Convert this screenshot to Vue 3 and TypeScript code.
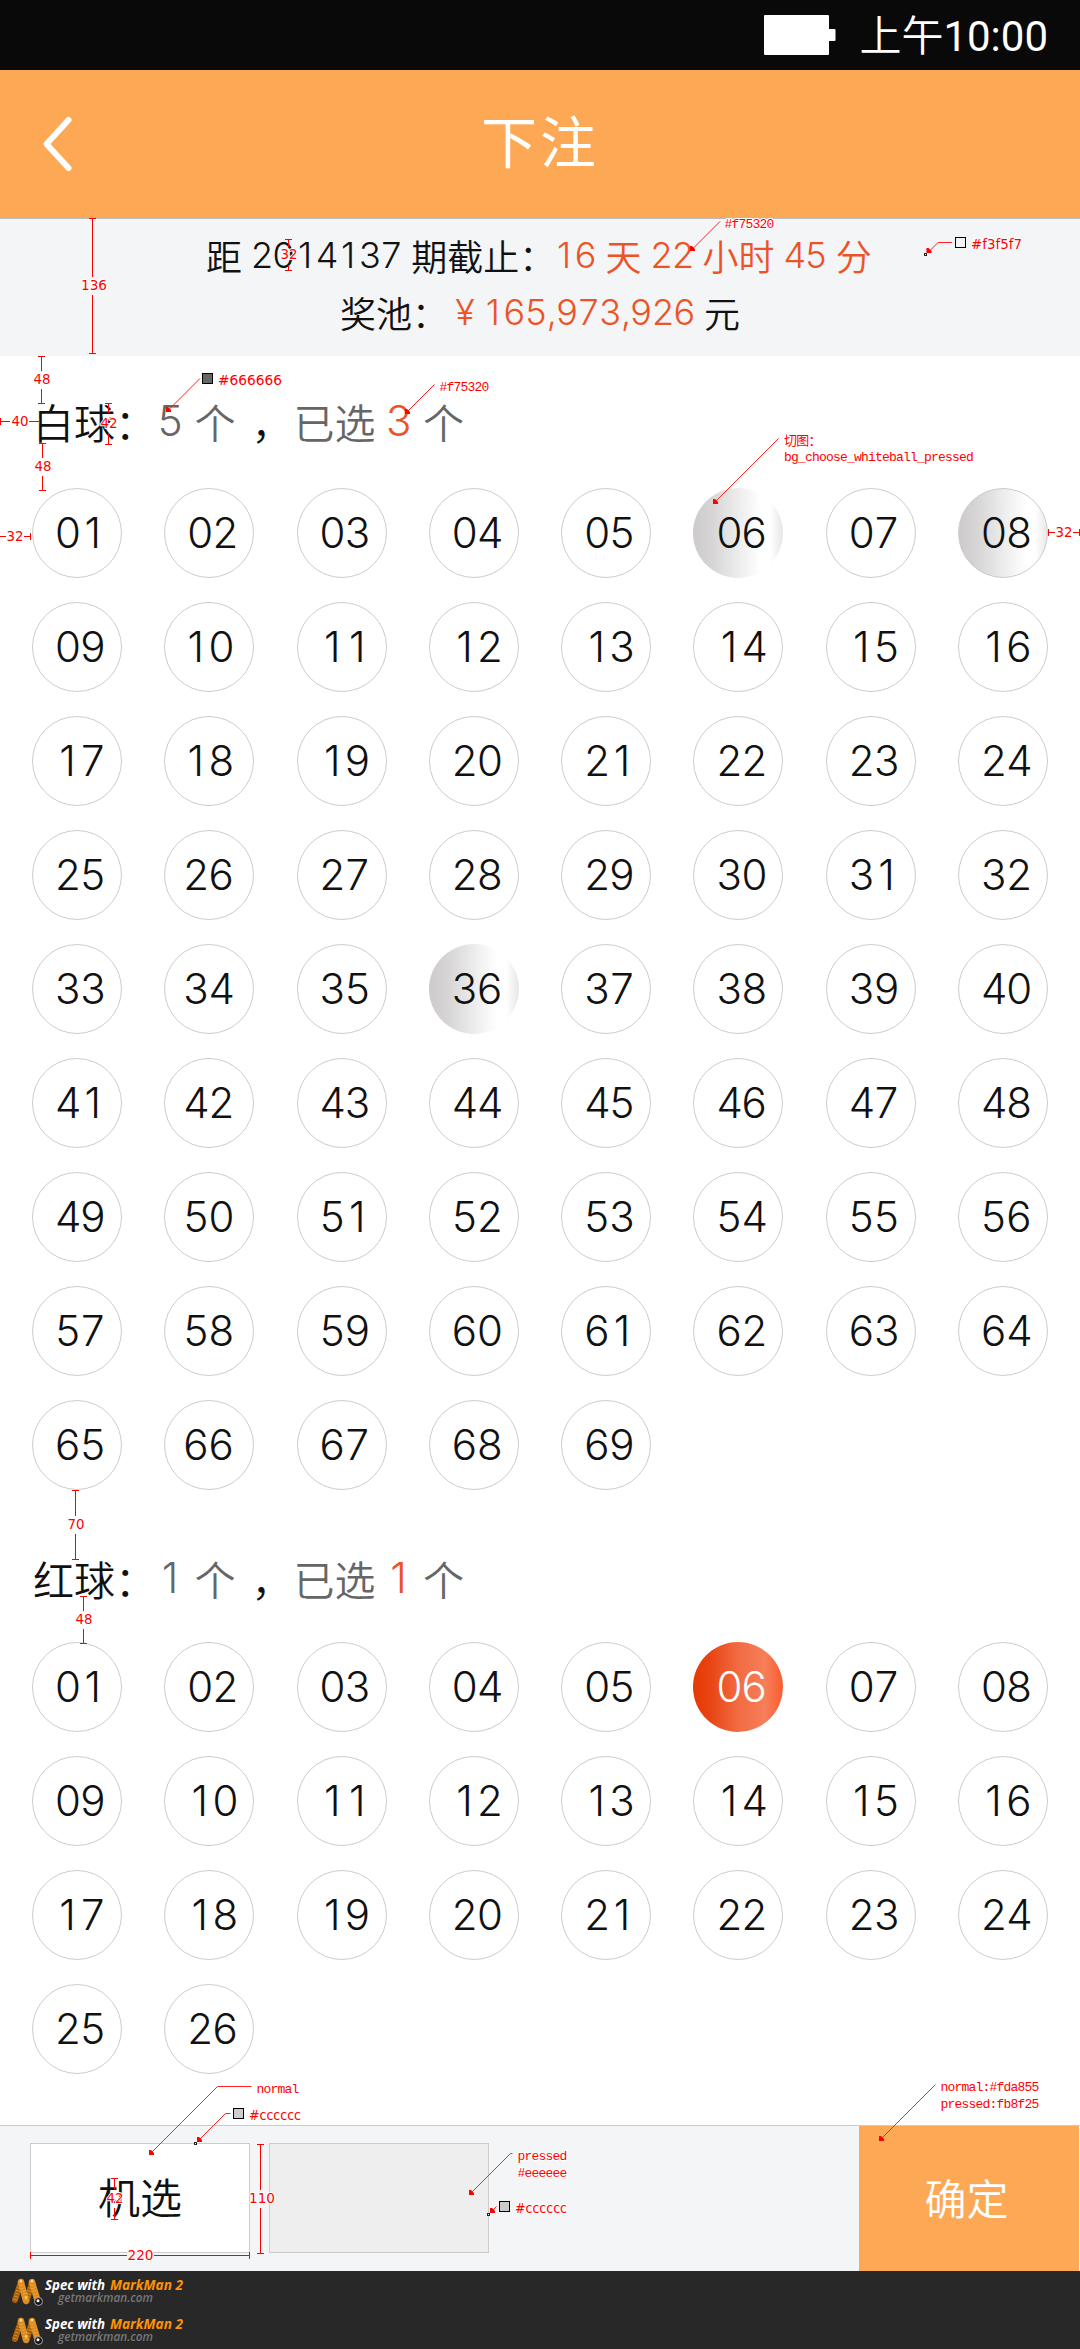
<script setup lang="ts">
import { h } from 'vue'

interface Ball { label: string; selected: boolean; edged: boolean; nudged: boolean }
interface Measure { axis: 'h' | 'v'; at: number; from: number; to: number; gap: [number, number]; label: string; x: number; y: number; w: number; startTick?: boolean }
interface Leader { points: string; tip: [number, number] }
interface Swatch { x: number; y: number; fill: string; label: string; tx: number; ty: number; w: number }
interface Note { x: number; y: number; text: string }

// Evenly pitched digits: every figure sits in a cell of the same width.
const Figures = (props: { value: string }) =>
  h('span', { class: 'num' }, [...props.value].map((c) => h('span', { class: c === ',' ? 'sep' : 'fig' }, c)))
Figures.props = ['value']

const pad = (n: number): string => String(n).padStart(2, '0')

function makeBalls(count: number, selected: number[], edged: number[], nudge: boolean): Ball[] {
  return Array.from({ length: count }, (_, i) => ({
    label: pad(i + 1),
    selected: selected.includes(i + 1),
    edged: edged.includes(i + 1),
    nudged: nudge && i > 7 && i % 8 === 1,
  }))
}

const whiteBalls = makeBalls(69, [6, 8, 36], [8], true)
const redBalls = makeBalls(26, [6], [], false)

const measures: Measure[] = [
  { axis: 'v', at: 92.5, from: 218.5, to: 353.5, gap: [277, 295], label: '136', x: 94, y: 290, w: 26 },
  { axis: 'v', at: 288.5, from: 239.5, to: 270.5, gap: [248, 265], label: '32', x: 289, y: 259, w: 17 },
  { axis: 'v', at: 41.5, from: 356.5, to: 403.5, gap: [371, 389], label: '48', x: 42, y: 384, w: 17 },
  { axis: 'h', at: 421.5, from: 0.5, to: 39.5, gap: [10, 29], label: '40', x: 20, y: 426, w: 17 },
  { axis: 'v', at: 108.5, from: 403.5, to: 444.5, gap: [413, 433], label: '42', x: 109, y: 428, w: 17 },
  { axis: 'v', at: 42.5, from: 443.5, to: 490.5, gap: [458, 476], label: '48', x: 43, y: 471, w: 17 },
  { axis: 'h', at: 536.5, from: 0, to: 30.5, gap: [6, 24], label: '32', x: 15, y: 541, w: 17, startTick: false },
  { axis: 'h', at: 532.5, from: 1048.5, to: 1079.5, gap: [1055, 1073], label: '32', x: 1064, y: 537, w: 17 },
  { axis: 'v', at: 75.5, from: 1490.5, to: 1559.5, gap: [1516, 1534], label: '70', x: 76, y: 1529, w: 17 },
  { axis: 'v', at: 83.5, from: 1596.5, to: 1643.5, gap: [1611, 1629], label: '48', x: 84, y: 1624, w: 17 },
  { axis: 'v', at: 114.5, from: 2178.5, to: 2219.5, gap: [2189, 2208], label: '42', x: 115, y: 2203, w: 17 },
  { axis: 'v', at: 260.5, from: 2144.5, to: 2253.5, gap: [2190, 2208], label: '110', x: 262, y: 2203, w: 26 },
  { axis: 'h', at: 2255.5, from: 30.5, to: 249.5, gap: [127, 154], label: '220', x: 140.5, y: 2260, w: 26 },
]

const leaders: Leader[] = [
  { points: '720,221.5 691,250.5', tip: [690, 251] },
  { points: '952,242.5 938,242.5 928,252.5', tip: [926.5, 253] },
  { points: '200,378.5 167,411.5', tip: [166, 412] },
  { points: '434.5,384.5 405,414', tip: [405, 414] },
  { points: '778.5,438.5 714,503', tip: [713, 504] },
  { points: '251.5,2086.5 217.5,2086.5 150,2154', tip: [149, 2155] },
  { points: '230.5,2113.5 225.5,2113.5 198,2141', tip: [197, 2142] },
  { points: '512.5,2153.5 510.5,2153.5 470,2194', tip: [469, 2195] },
  { points: '496.5,2206.5 491,2212', tip: [490, 2213] },
  { points: '935.5,2084.5 880,2140', tip: [879, 2141] },
]

const swatches: Swatch[] = [
  { x: 955, y: 237, fill: '#f3f5f7', label: '#f3f5f7', tx: 971, ty: 249, w: 51 },
  { x: 202, y: 373, fill: '#666666', label: '#666666', tx: 218, ty: 385, w: 64 },
  { x: 233, y: 2108, fill: '#cccccc', label: '#cccccc', tx: 249, ty: 2120, w: 52 },
  { x: 499, y: 2201, fill: '#cccccc', label: '#cccccc', tx: 515, ty: 2213, w: 52 },
]

const notes: Note[] = [
  { x: 724.5, y: 228, text: '#f75320' },
  { x: 439.5, y: 391, text: '#f75320' },
  { x: 784, y: 445, text: '切图：' },
  { x: 784, y: 461, text: 'bg_choose_whiteball_pressed' },
  { x: 256.5, y: 2093, text: 'normal' },
  { x: 517.5, y: 2160, text: 'pressed' },
  { x: 517.5, y: 2177, text: '#eeeeee' },
  { x: 940.5, y: 2091, text: 'normal:#fda855' },
  { x: 940.5, y: 2108, text: 'pressed:fb8f25' },
]

const probes: [number, number][] = [[924, 253], [194, 2142], [487, 2213]]

function measurePath(m: Measure): string {
  const { at, from, to, gap } = m
  if (m.axis === 'v') {
    return `M${at - 3.5} ${from}h7M${at - 3.5} ${to}h7M${at} ${from}V${gap[0]}M${at} ${gap[1]}V${to}`
  }
  const start = m.startTick === false ? '' : `M${from} ${at - 3.5}v7`
  return `${start}M${to} ${at - 3.5}v7M${from} ${at}H${gap[0]}M${gap[1]} ${at}H${to}`
}
</script>

<template>
  <div class="page">
    <header class="status">
      <svg class="battery" width="72" height="40" viewBox="0 0 72 40"><rect width="65" height="40" rx="1" /><rect x="62" y="14" width="9.5" height="12" rx="1" /></svg>
      <span class="clock"><span class="half">上午</span>10:00</span>
    </header>

    <nav class="titlebar">
      <svg class="back" width="40" height="64" viewBox="0 0 40 64"><path d="M28.5 8L6.500 32L28.500 56" /></svg>
      <h1>下注</h1>
    </nav>

    <section class="info">
      <p class="deadline"><span>距</span><Figures class="gap" value="2014137" /><span class="gap">期截止：</span><Figures class="hot first" value="16" /><span class="hot gap">天</span><Figures class="hot gap" value="22" /><span class="hot gap">小时</span><Figures class="hot gap" value="45" /><span class="hot gap">分</span></p>
      <p class="pool"><span>奖池：</span><span class="hot yen">¥</span><Figures class="hot amount" value="165,973,926" /><span class="gap">元</span></p>
    </section>

    <main>
      <h2 class="heading white-heading">
        <span>白球：</span><Figures class="grey" value="5" /><span class="grey">个</span><span>，</span><span class="grey">已选</span><Figures class="hot" value="3" /><span class="grey">个</span>
      </h2>
      <div class="balls">
        <span v-for="b in whiteBalls" :key="b.label" class="ball" :class="{ silver: b.selected, edged: b.edged, nudged: b.nudged }"><Figures :value="b.label" /></span>
      </div>
      <h2 class="heading red-heading">
        <span>红球：</span><Figures class="grey" value="1" /><span class="grey">个</span><span>，</span><span class="grey">已选</span><Figures class="hot" value="1" /><span class="grey">个</span>
      </h2>
      <div class="balls">
        <span v-for="b in redBalls" :key="b.label" class="ball" :class="{ scarlet: b.selected }"><Figures :value="b.label" /></span>
      </div>
    </main>

    <div class="actions">
      <button class="plain">机选</button>
      <button class="plain pressed" aria-label="pressed"></button>
      <button class="confirm">确定</button>
    </div>

    <footer class="credits">
      <svg v-for="n in 2" :key="n" class="credit" width="200" height="39" viewBox="0 0 200 39">
        <g fill="none" stroke-linecap="round">
          <path d="M21 11L15 29" stroke="#a85f08" stroke-width="6" />
          <path d="M32 11L27 29" stroke="#a85f08" stroke-width="6" />
          <path d="M21 11L26 30" stroke="#dc8c20" stroke-width="6.500" />
          <path d="M32 11L38 31" stroke="#dc8c20" stroke-width="6.500" />
          <path d="M21 11L26 30M32 11L38 31M21 11L15 29M32 11L27 29" stroke="#f4b050" stroke-opacity=".65" stroke-width="4.500" stroke-dasharray=".8 2.200" stroke-linecap="butt" />
        </g>
        <circle cx="21" cy="10" r="1.200" fill="#ffe2a0" /><circle cx="32" cy="10" r="1.200" fill="#ffe2a0" /><circle cx="26" cy="26.500" r="1.200" fill="#ffdf50" />
        <circle cx="38.500" cy="30.500" r="4" fill="#171717" stroke="#a8a8a8" stroke-width="1" /><circle cx="38" cy="29.800" r="1.500" fill="#fff" />
        <text class="spec" x="45" y="19" textLength="60" lengthAdjust="spacingAndGlyphs" fill="#fff">Spec with</text>
        <text class="spec" x="110" y="19" textLength="73" lengthAdjust="spacingAndGlyphs" fill="#ff9205">MarkMan 2</text>
        <text class="site" x="58" y="31" textLength="95" lengthAdjust="spacingAndGlyphs" fill="#777">getmarkman.com</text>
      </svg>
    </footer>

    <svg class="marks" width="1080" height="2349" viewBox="0 0 1080 2349">
      <g v-for="(m, i) in measures" :key="'m' + i">
        <path class="rule" :d="measurePath(m)" />
        <text class="dim" :x="m.x" :y="m.y" :textLength="m.w" lengthAdjust="spacingAndGlyphs" text-anchor="middle">{{ m.label }}</text>
      </g>
      <g v-for="(l, i) in leaders" :key="'l' + i">
        <polyline class="leader" :points="l.points" />
        <path class="tip" :d="`M${l.tip[0]} ${l.tip[1]}v-5l2 0l3 3v2z`" />
      </g>
      <rect v-for="(p, i) in probes" :key="'p' + i" :x="p[0] + 0.5" :y="p[1] + 0.5" width="2" height="2" fill="#fff" stroke="#222" />
      <g v-for="(s, i) in swatches" :key="'s' + i">
        <rect :x="s.x + 0.5" :y="s.y + 0.5" width="10" height="10" :fill="s.fill" stroke="#000" />
        <text class="dim" :x="s.tx" :y="s.ty" :textLength="s.w" lengthAdjust="spacingAndGlyphs">{{ s.label }}</text>
      </g>
      <text v-for="(n, i) in notes" :key="'n' + i" class="note" :x="n.x" :y="n.y">{{ n.text }}</text>
    </svg>
  </div>
</template>

<style>
body { margin: 0; }
</style>

<style scoped>
.page { position: relative; width: 1080px; height: 2349px; overflow: hidden; background: #fff; color: #111; font-family: "Noto Sans CJK SC", sans-serif; }
.page :deep(.num) { font-family: Inter, "Noto Sans CJK SC", sans-serif; font-weight: 350; white-space: nowrap; }
.page :deep(.fig), .page :deep(.sep) { display: inline-block; width: .6em; text-align: center; }
.page :deep(.sep) { width: .26em; }
.hot { color: #ec5326; }
.grey { color: #666; }

.status { display: flex; align-items: center; justify-content: flex-end; box-sizing: border-box; height: 70px; padding-right: 32px; background: #090909; color: #fff; }
.battery { fill: #fff; margin-right: 23px; }
.clock { height: 70px; font: 400 42px/65px Roboto, "Noto Sans CJK SC", sans-serif; white-space: nowrap; }
.half { font-family: "Noto Sans CJK SC", sans-serif; font-weight: 350; }

.titlebar { display: grid; grid-template-columns: 120px 1fr 120px; align-items: center; height: 148px; background: #fda855; color: #fff; }
.back { margin-left: 40px; fill: none; stroke: #fff; stroke-width: 6; stroke-linecap: round; stroke-linejoin: round; }
h1 { margin: 0; padding-bottom: 10px; font-size: 56px; font-weight: 400; line-height: 138px; text-align: center; letter-spacing: 3px; }

.info { box-sizing: border-box; height: 138px; border-top: 1px solid #bbb; background: #f3f5f7; font-size: 36px; font-weight: 350; }
.info p { display: flex; margin: 0; height: 57px; line-height: 57px; white-space: nowrap; }
.deadline { padding: 8px 0 0 206px; }
.pool { padding-left: 340px; }
.gap { margin-left: 9px; }
.first { margin-left: -2px; }
.yen { width: 24px; margin: 0 5px; font-family: Inter, sans-serif; font-weight: 350; text-align: center; }

.heading { display: grid; grid-template-columns: 124.5px 37px 57px 42px 92.500px 37px 60px; margin: 0; padding-left: 33px; font-size: 41px; font-weight: 350; line-height: 60px; white-space: nowrap; }
.heading :deep(.num) { font-size: 42px; }
.white-heading { padding-top: 35px; height: 97px; }
.red-heading { padding-top: 58px; height: 94px; }

.balls { display: grid; grid-template-columns: repeat(8, 90px); grid-auto-rows: 90px; row-gap: 24px; justify-content: space-between; padding: 0 32px; }
.ball { box-sizing: border-box; padding-left: 22px; border: 1px solid #ccc; border-radius: 50%; background: #fff; font-size: 42px; font-family: Inter, sans-serif; line-height: 87px; }
.nudged { padding-left: 18px; }
.silver, .scarlet { padding-left: 23px; padding-top: 1px; border: 0; }
.silver { background: linear-gradient(90deg, #cdcacb 0%, #d6d4d5 20%, #ececec 50%, #fff 76%, #fff 86%, #e6e6e6 100%); }
.silver.edged { border: 1px solid #ccc; padding-left: 22px; padding-top: 0; background-origin: border-box; }
.scarlet { background: linear-gradient(90deg, #e63a02 0%, #e84312 18%, #f16b42 50%, #f67f5a 80%, #fb5c2d 100%); color: #fff; }

.actions { display: flex; box-sizing: border-box; height: 146px; margin-top: 51px; padding: 0 1px 0 30px; border-top: 1px solid #ccc; background: #f3f5f7; }
button { box-sizing: border-box; width: 220px; padding: 0 0 4px; border: 0; border-radius: 0; color: #111; font: 350 42px/100px "Noto Sans CJK SC", sans-serif; }
.plain { height: 110px; margin: 17px 19px 0 0; border: 1px solid #ccc; background: #fff; }
.pressed { background: #eee; }
.confirm { height: 145px; margin-left: auto; padding-right: 5px; background: #fda855; color: #fff; }

.credits { height: 78px; background: #282828; }
.credit { display: block; }
.spec { font: italic 700 14px "Open Sans", sans-serif; }
.site { font: italic 600 12px "Open Sans", sans-serif; }

.marks { position: absolute; inset: 0; pointer-events: none; }
.rule { fill: none; stroke: #f00; stroke-width: 1; shape-rendering: crispEdges; }
.leader { fill: none; stroke: #f22; stroke-width: 1; }
.tip { fill: #f00; }
.dim { fill: #f00; font: 13.3px "DejaVu Sans", sans-serif; }
.note { fill: #f00; font: 13px "Liberation Mono", "Noto Sans CJK SC", monospace; letter-spacing: -.8px; }
.dim, .note { paint-order: stroke; stroke: #fff; stroke-width: 2px; stroke-linejoin: round; }
</style>
